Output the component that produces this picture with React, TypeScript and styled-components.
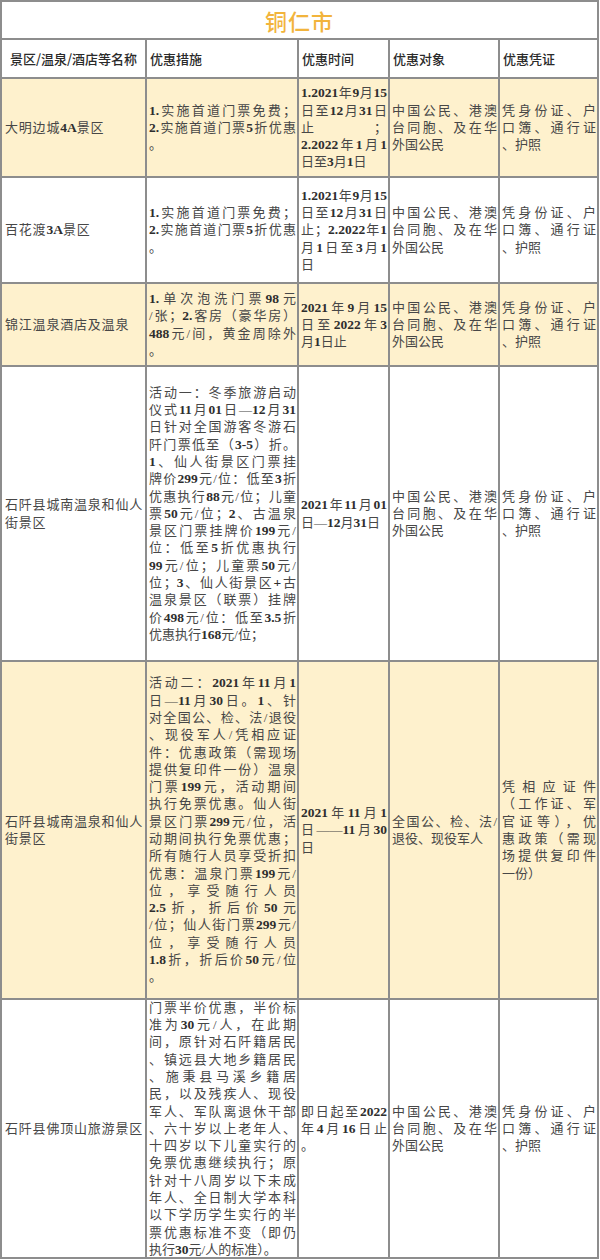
import React from 'react';
import styled, { createGlobalStyle } from 'styled-components';

const GlobalStyle = createGlobalStyle`
  html, body {
    margin: 0;
    padding: 0;
    background: #ffffff;
  }
`;

type Tone = 'cream' | 'white';

type Row = {
  tone: Tone;
  name: string[];
  measure: string[];
  time: string[];
  target: string[];
  proof: string[];
};

const CITIZEN = ['中国公民、港澳', '台同胞、及在华', '外国公民'];
const ID_PROOF = ['凭身份证、户', '口簿、通行证', '、护照'];
const FREE_GATE = ['1.实施首道门票免费；', '2.实施首道门票5折优惠', '。'];

const rows: Row[] = [
  {
    tone: 'cream',
    name: ['大明边城4A景区'],
    measure: FREE_GATE,
    time: ['1.2021年9月15', '日至12月31日', '止；', '2.2022年1月1', '日至3月1日'],
    target: CITIZEN,
    proof: ID_PROOF,
  },
  {
    tone: 'white',
    name: ['百花渡3A景区'],
    measure: FREE_GATE,
    time: ['1.2021年9月15', '日至12月31日', '止；2.2022年1', '月1日至3月1', '日'],
    target: CITIZEN,
    proof: ID_PROOF,
  },
  {
    tone: 'cream',
    name: ['锦江温泉酒店及温泉'],
    measure: ['1.单次泡洗门票98元', '/张；2.客房（豪华房）', '488元/间，黄金周除外', '。'],
    time: ['2021年9月15', '日至2022年3', '月1日止'],
    target: CITIZEN,
    proof: ID_PROOF,
  },
  {
    tone: 'white',
    name: ['石阡县城南温泉和仙人', '街景区'],
    measure: [
      '活动一：冬季旅游启动',
      '仪式11月01日—12月31',
      '日针对全国游客冬游石',
      '阡门票低至（3-5）折。',
      '1、仙人街景区门票挂',
      '牌价299元/位：低至3折',
      '优惠执行88元/位；儿童',
      '票50元/位；2、古温泉',
      '景区门票挂牌价199元/',
      '位：低至5折优惠执行',
      '99元/位；儿童票50元/',
      '位；3、仙人街景区+古',
      '温泉景区（联票）挂牌',
      '价498元/位：低至3.5折',
      '优惠执行168元/位；',
    ],
    time: ['2021年11月01', '日—12月31日'],
    target: CITIZEN,
    proof: ID_PROOF,
  },
  {
    tone: 'cream',
    name: ['石阡县城南温泉和仙人', '街景区'],
    measure: [
      '活动二：2021年11月1',
      '日—11月30日。1、针',
      '对全国公、检、法/退役',
      '、现役军人/凭相应证',
      '件：优惠政策（需现场',
      '提供复印件一份）温泉',
      '门票199元，活动期间',
      '执行免票优惠。仙人街',
      '景区门票299元/位，活',
      '动期间执行免票优惠；',
      '所有随行人员享受折扣',
      '优惠：温泉门票199元/',
      '位，享受随行人员',
      '2.5折，折后价50元',
      '/位；仙人街门票299元/',
      '位，享受随行人员',
      '1.8折，折后价50元/位',
      '。',
    ],
    time: ['2021年11月1', '日——11月30', '日'],
    target: ['全国公、检、法/', '退役、现役军人'],
    proof: ['凭相应证件', '（工作证、军', '官证等），优', '惠政策（需现', '场提供复印件', '一份）'],
  },
  {
    tone: 'white',
    name: ['石阡县佛顶山旅游景区'],
    measure: [
      '门票半价优惠，半价标',
      '准为30元/人，在此期',
      '间，原针对石阡籍居民',
      '、镇远县大地乡籍居民',
      '、施秉县马溪乡籍居',
      '民，以及残疾人、现役',
      '军人、军队离退休干部',
      '、六十岁以上老年人、',
      '十四岁以下儿童实行的',
      '免票优惠继续执行；原',
      '针对十八周岁以下未成',
      '年人、全日制大学本科',
      '以下学历学生实行的半',
      '票优惠标准不变（即仍',
      '执行30元/人的标准）。',
    ],
    time: ['即日起至2022', '年4月16日止', '。'],
    target: CITIZEN,
    proof: ID_PROOF,
  },
];

const Table = styled.div`
  width: 599px;
  box-sizing: border-box;
  display: grid;
  grid-template-columns: 143px 150px 89px 108px 97px;
  grid-template-rows: 36px 37px 97px 104px 81px 293px 336px 257px;
  gap: 2px;
  padding: 2px;
  background: #8d8d8d;
`;

const TitleCell = styled.div`
  grid-column: 1 / -1;
  background: #ffffff;
  display: flex;
  align-items: center;
  justify-content: center;
  font-family: 'Noto Sans CJK SC', sans-serif;
  font-size: 22px;
  font-weight: 500;
  letter-spacing: 1px;
  color: #f2b43c;
`;

const HeadCell = styled.div<{ $center?: boolean }>`
  background: #ffffff;
  display: flex;
  align-items: center;
  justify-content: ${(p) => (p.$center ? 'center' : 'flex-start')};
  padding: 0 3px;
  font-family: 'Noto Sans CJK SC', sans-serif;
  font-size: 13px;
  font-weight: 500;
  color: #2a2a2a;
`;

const Cell = styled.div<{ $tone: Tone }>`
  background: ${(p) => (p.$tone === 'cream' ? '#fef1cd' : '#ffffff')};
  display: flex;
  flex-direction: column;
  justify-content: center;
  padding: 0 1px 0 2px;
  min-width: 0;
  font-family: 'Liberation Serif', 'Noto Sans CJK SC', serif;
  font-size: 13px;
  line-height: 17.3px;
  color: #474747;
`;

const NameCell = styled(Cell)`
  padding-left: 3px;
  letter-spacing: 0.8px;
`;

const Line = styled.div<{ $fill?: boolean }>`
  white-space: nowrap;
  text-align: ${(p) => (p.$fill ? 'justify' : 'left')};
  text-align-last: ${(p) => (p.$fill ? 'justify' : 'left')};
`;

// digits and latin in the source are set in a heavier Times face
const Num = styled.span`
  font-weight: 700;
  font-size: 13.5px;
  color: #2e2e2e;
  letter-spacing: 0;
`;

function withNums(text: string) {
  return text.split(/([0-9A-Za-z.\-+]+)/).map((part, i) =>
    i % 2 === 1 ? <Num key={i}>{part}</Num> : part,
  );
}

function Lines({ lines, justify = true }: { lines: string[]; justify?: boolean }) {
  return (
    <>
      {lines.map((l, i) => (
        <Line key={i} $fill={justify && i < lines.length - 1}>
          {withNums(l)}
        </Line>
      ))}
    </>
  );
}

export default function App() {
  return (
    <>
      <GlobalStyle />
      <Table>
        <TitleCell>铜仁市</TitleCell>
        <HeadCell $center>景区/温泉/酒店等名称</HeadCell>
        <HeadCell>优惠措施</HeadCell>
        <HeadCell>优惠时间</HeadCell>
        <HeadCell>优惠对象</HeadCell>
        <HeadCell>优惠凭证</HeadCell>
        {rows.map((r, i) => (
          <React.Fragment key={i}>
            <NameCell $tone={r.tone}>
              <Lines lines={r.name} justify={false} />
            </NameCell>
            <Cell $tone={r.tone}>
              <Lines lines={r.measure} />
            </Cell>
            <Cell $tone={r.tone}>
              <Lines lines={r.time} />
            </Cell>
            <Cell $tone={r.tone}>
              <Lines lines={r.target} />
            </Cell>
            <Cell $tone={r.tone}>
              <Lines lines={r.proof} />
            </Cell>
          </React.Fragment>
        ))}
      </Table>
    </>
  );
}
